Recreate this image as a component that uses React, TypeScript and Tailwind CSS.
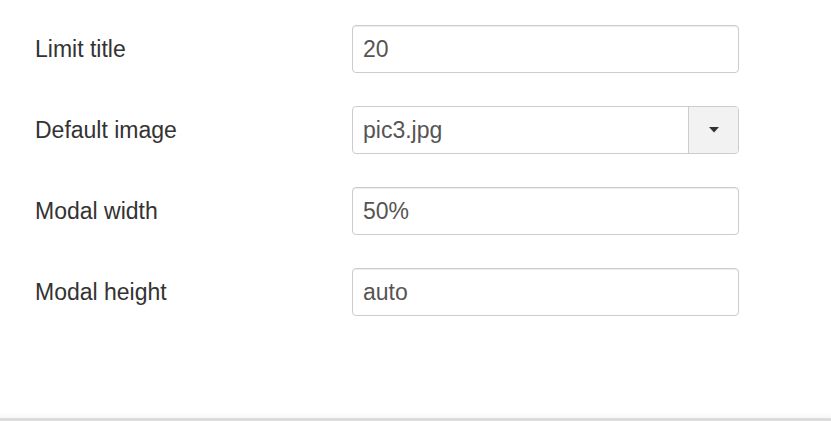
import React from "react";

const font = { fontFamily: '"Liberation Sans", Arial, sans-serif' };

function Row({ label, children }: { label: string; children: React.ReactNode }) {
  return (
    <div className="flex items-center h-[48px]">
      <div className="w-[317px] text-[23px] text-[#333333] leading-none pt-[1px]">{label}</div>
      {children}
    </div>
  );
}

function TextInput({ value }: { value: string }) {
  return (
    <div className="w-[387px] h-[48px] border border-[#cccccc] rounded-[4px] bg-white flex items-center pl-[10px] text-[23px] text-[#555555] shadow-[inset_0_1px_1px_rgba(0,0,0,0.075)]">
      {value}
    </div>
  );
}

export default function App() {
  return (
    <div className="w-[831px] h-[421px] bg-white flex flex-col" style={font}>
      <div className="flex-1 pl-[35px] pt-[25px] flex flex-col gap-[33px]">
        <Row label="Limit title">
          <TextInput value="20" />
        </Row>
        <Row label="Default image">
          <div className="w-[387px] h-[48px] border border-[#cccccc] rounded-[4px] bg-white flex text-[23px] text-[#555555] overflow-hidden">
            <div className="flex-1 flex items-center pl-[10px]">pic3.jpg</div>
            <div className="w-[50px] border-l border-[#cccccc] bg-[#f2f2f2] flex items-center justify-center">
              <svg width="10" height="6" viewBox="0 0 10 6">
                <polygon points="0,0 10,0 5,5.5" fill="#333333" />
              </svg>
            </div>
          </div>
        </Row>
        <Row label="Modal width">
          <TextInput value="50%" />
        </Row>
        <Row label="Modal height">
          <TextInput value="auto" />
        </Row>
      </div>
      <div className="h-[5px] bg-gradient-to-b from-[#ffffff] to-[#f7f7f7]" />
      <div className="h-[3px] bg-[#dcdcdc]" />
    </div>
  );
}
